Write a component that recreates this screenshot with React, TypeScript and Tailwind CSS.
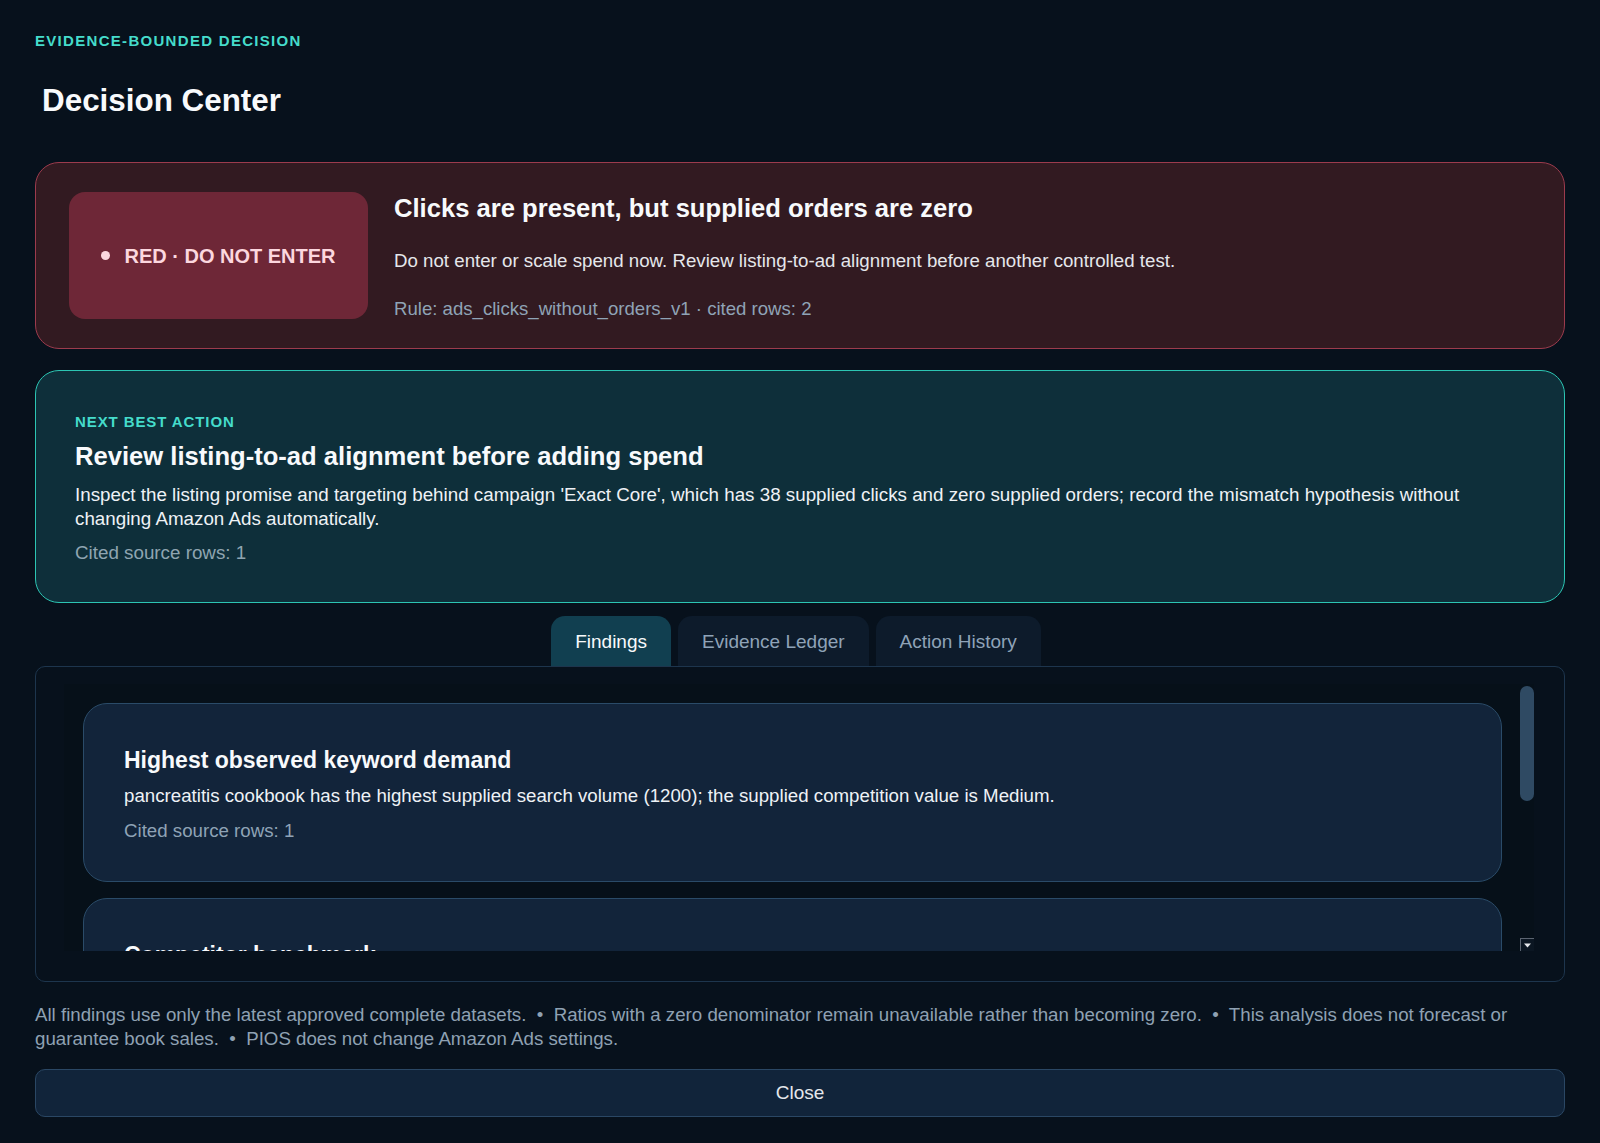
import { useState } from 'react';

type Finding = {
    title: string;
    body: string;
    rows: number;
};

const findings: Finding[] = [
    {
        title: 'Highest observed keyword demand',
        body: 'pancreatitis cookbook has the highest supplied search volume (1200); the supplied competition value is Medium.',
        rows: 1,
    },
    {
        title: 'Competitor benchmark',
        body: 'The supplied competitor set has a median price and review count that can be compared with this listing.',
        rows: 3,
    },
    {
        title: 'Campaign efficiency unavailable',
        body: 'ACOS cannot be calculated because supplied sales are zero; the ratio remains unavailable.',
        rows: 1,
    },
];

const notes = [
    'All findings use only the latest approved complete datasets.',
    'Ratios with a zero denominator remain unavailable rather than becoming zero.',
    'This analysis does not forecast or guarantee book sales.',
    'PIOS does not change Amazon Ads settings.',
];

const tabs = ['Findings', 'Evidence Ledger', 'Action History'] as const;

export default function App() {
    const [activeTab, setActiveTab] = useState<(typeof tabs)[number]>('Findings');

    return (
        <div className="min-h-screen bg-[#07111c] px-[35px] pt-[32px] pb-[26px] font-['Liberation_Sans',Arial,sans-serif] text-white">
            <div className="text-[15px] font-bold leading-[17px] tracking-[1.3px] text-[#45dccb]">
                EVIDENCE-BOUNDED DECISION
            </div>
            <h1 className="mt-[33px] pl-[7px] text-[31.4px] font-bold leading-[38px] text-[#f8fafc]">
                Decision Center
            </h1>

            {/* Verdict */}
            <div className="mt-[42px] flex items-start gap-[26px] rounded-3xl border border-[#9c3b4d] bg-[#321a21] px-[33px] py-[29px]">
                <div className="flex h-[127px] w-[299px] shrink-0 items-center justify-center gap-[14px] rounded-2xl bg-[#6e2737]">
                    <span className="h-[9px] w-[9px] rounded-full bg-[#fcd7df]" />
                    <span className="text-[20px] font-bold text-[#fcd7df]">RED · DO NOT ENTER</span>
                </div>
                <div className="h-[127px] min-w-0 flex-1 pt-[1px]">
                    <h2 className="text-[25.6px] font-bold leading-[31px] text-[#f8fafc]">
                        Clicks are present, but supplied orders are zero
                    </h2>
                    <p className="mt-[25px] text-[18.7px] leading-[24px] text-[#e5e7eb]">
                        Do not enter or scale spend now. Review listing-to-ad alignment before another controlled test.
                    </p>
                    <p className="mt-[24px] text-[18.6px] leading-[24px] text-[#8fa3b6]">
                        Rule: ads_clicks_without_orders_v1 · cited rows: 2
                    </p>
                </div>
            </div>

            {/* Next best action */}
            <div className="mt-[21px] rounded-3xl border border-[#2cc5b3] bg-[#0e2f3a] px-[39px] pt-[42px] pb-[37px]">
                <div className="text-[15px] font-bold leading-[17px] tracking-[0.9px] text-[#45dccb]">
                    NEXT BEST ACTION
                </div>
                <h2 className="mt-[11px] text-[25.6px] font-bold leading-[31px] text-[#f8fafc]">
                    Review listing-to-ad alignment before adding spend
                </h2>
                <p className="mt-[11px] text-[18.8px] leading-[23.5px] text-[#eef2f6]">
                    Inspect the listing promise and targeting behind campaign 'Exact Core', which has 38 supplied clicks and zero supplied orders; record the mismatch hypothesis without changing Amazon Ads automatically.
                </p>
                <p className="mt-[11px] text-[18.8px] leading-[24px] text-[#8fa5b1]">Cited source rows: 1</p>
            </div>

            {/* Tabs */}
            <div className="mt-[13px] flex justify-center gap-[7px] pr-[8px]">
                {tabs.map((t) => (
                    <button
                        key={t}
                        onClick={() => setActiveTab(t)}
                        className={`h-[50px] rounded-t-[14px] px-6 pt-[2px] text-[19px] ${activeTab === t ? 'bg-[#113f50] text-[#f8fafc]' : 'bg-[#0d1b2b] text-[#8fa3b8]'}`}
                    >
                        {t}
                    </button>
                ))}
            </div>

            {/* Panel */}
            <div className="rounded-[10px] border border-[#1d354d] pt-[17px] pr-[30px] pb-[30px] pl-[28px]">
                <div className="flex h-[267px] bg-[#061019]">
                    <div className="min-w-0 flex-1 overflow-hidden pt-[19px] pr-[18px] pl-[19px]">
                        <div className="flex flex-col gap-4">
                            {findings.map((f) => (
                                <div key={f.title} className="rounded-3xl border border-[#2a4b68] bg-[#12243a] px-10 pt-[42px] pb-[38px]">
                                    <h3 className="text-[23px] font-bold leading-[28px] text-[#f8fafc]">{f.title}</h3>
                                    <p className="mt-[10px] text-[18.7px] leading-[24px] text-[#eef2f6]">{f.body}</p>
                                    <p className="mt-[11px] text-[18.7px] leading-[24px] text-[#8fa3b6]">
                                        Cited source rows: {f.rows}
                                    </p>
                                </div>
                            ))}
                        </div>
                    </div>
                    {/* scrollbar */}
                    <div className="flex w-[14px] shrink-0 flex-col justify-between">
                        <div className="mt-[2px] h-[115px] rounded-full bg-[#2f4a63]" />
                        <div className="flex h-[13px] items-center justify-center border-t border-l border-[#5b6470] bg-[#0b1622]">
                            <svg width="7" height="5" viewBox="0 0 7 5">
                                <path d="M0 0.5 L7 0.5 L3.5 4.5 Z" fill="#e5e7eb" />
                            </svg>
                        </div>
                    </div>
                </div>
            </div>

            {/* Notes */}
            <p className="mt-[21px] text-[18.7px] leading-[23.5px] text-[#8fa1b3]">
                {notes.join(' \u00a0•\u00a0 ')}
            </p>

            <button className="mt-[19px] h-[48px] w-full rounded-[10px] border border-[#2a4764] bg-[#11243a] text-[19px] text-[#e5e7eb]">
                Close
            </button>
        </div>
    );
}
